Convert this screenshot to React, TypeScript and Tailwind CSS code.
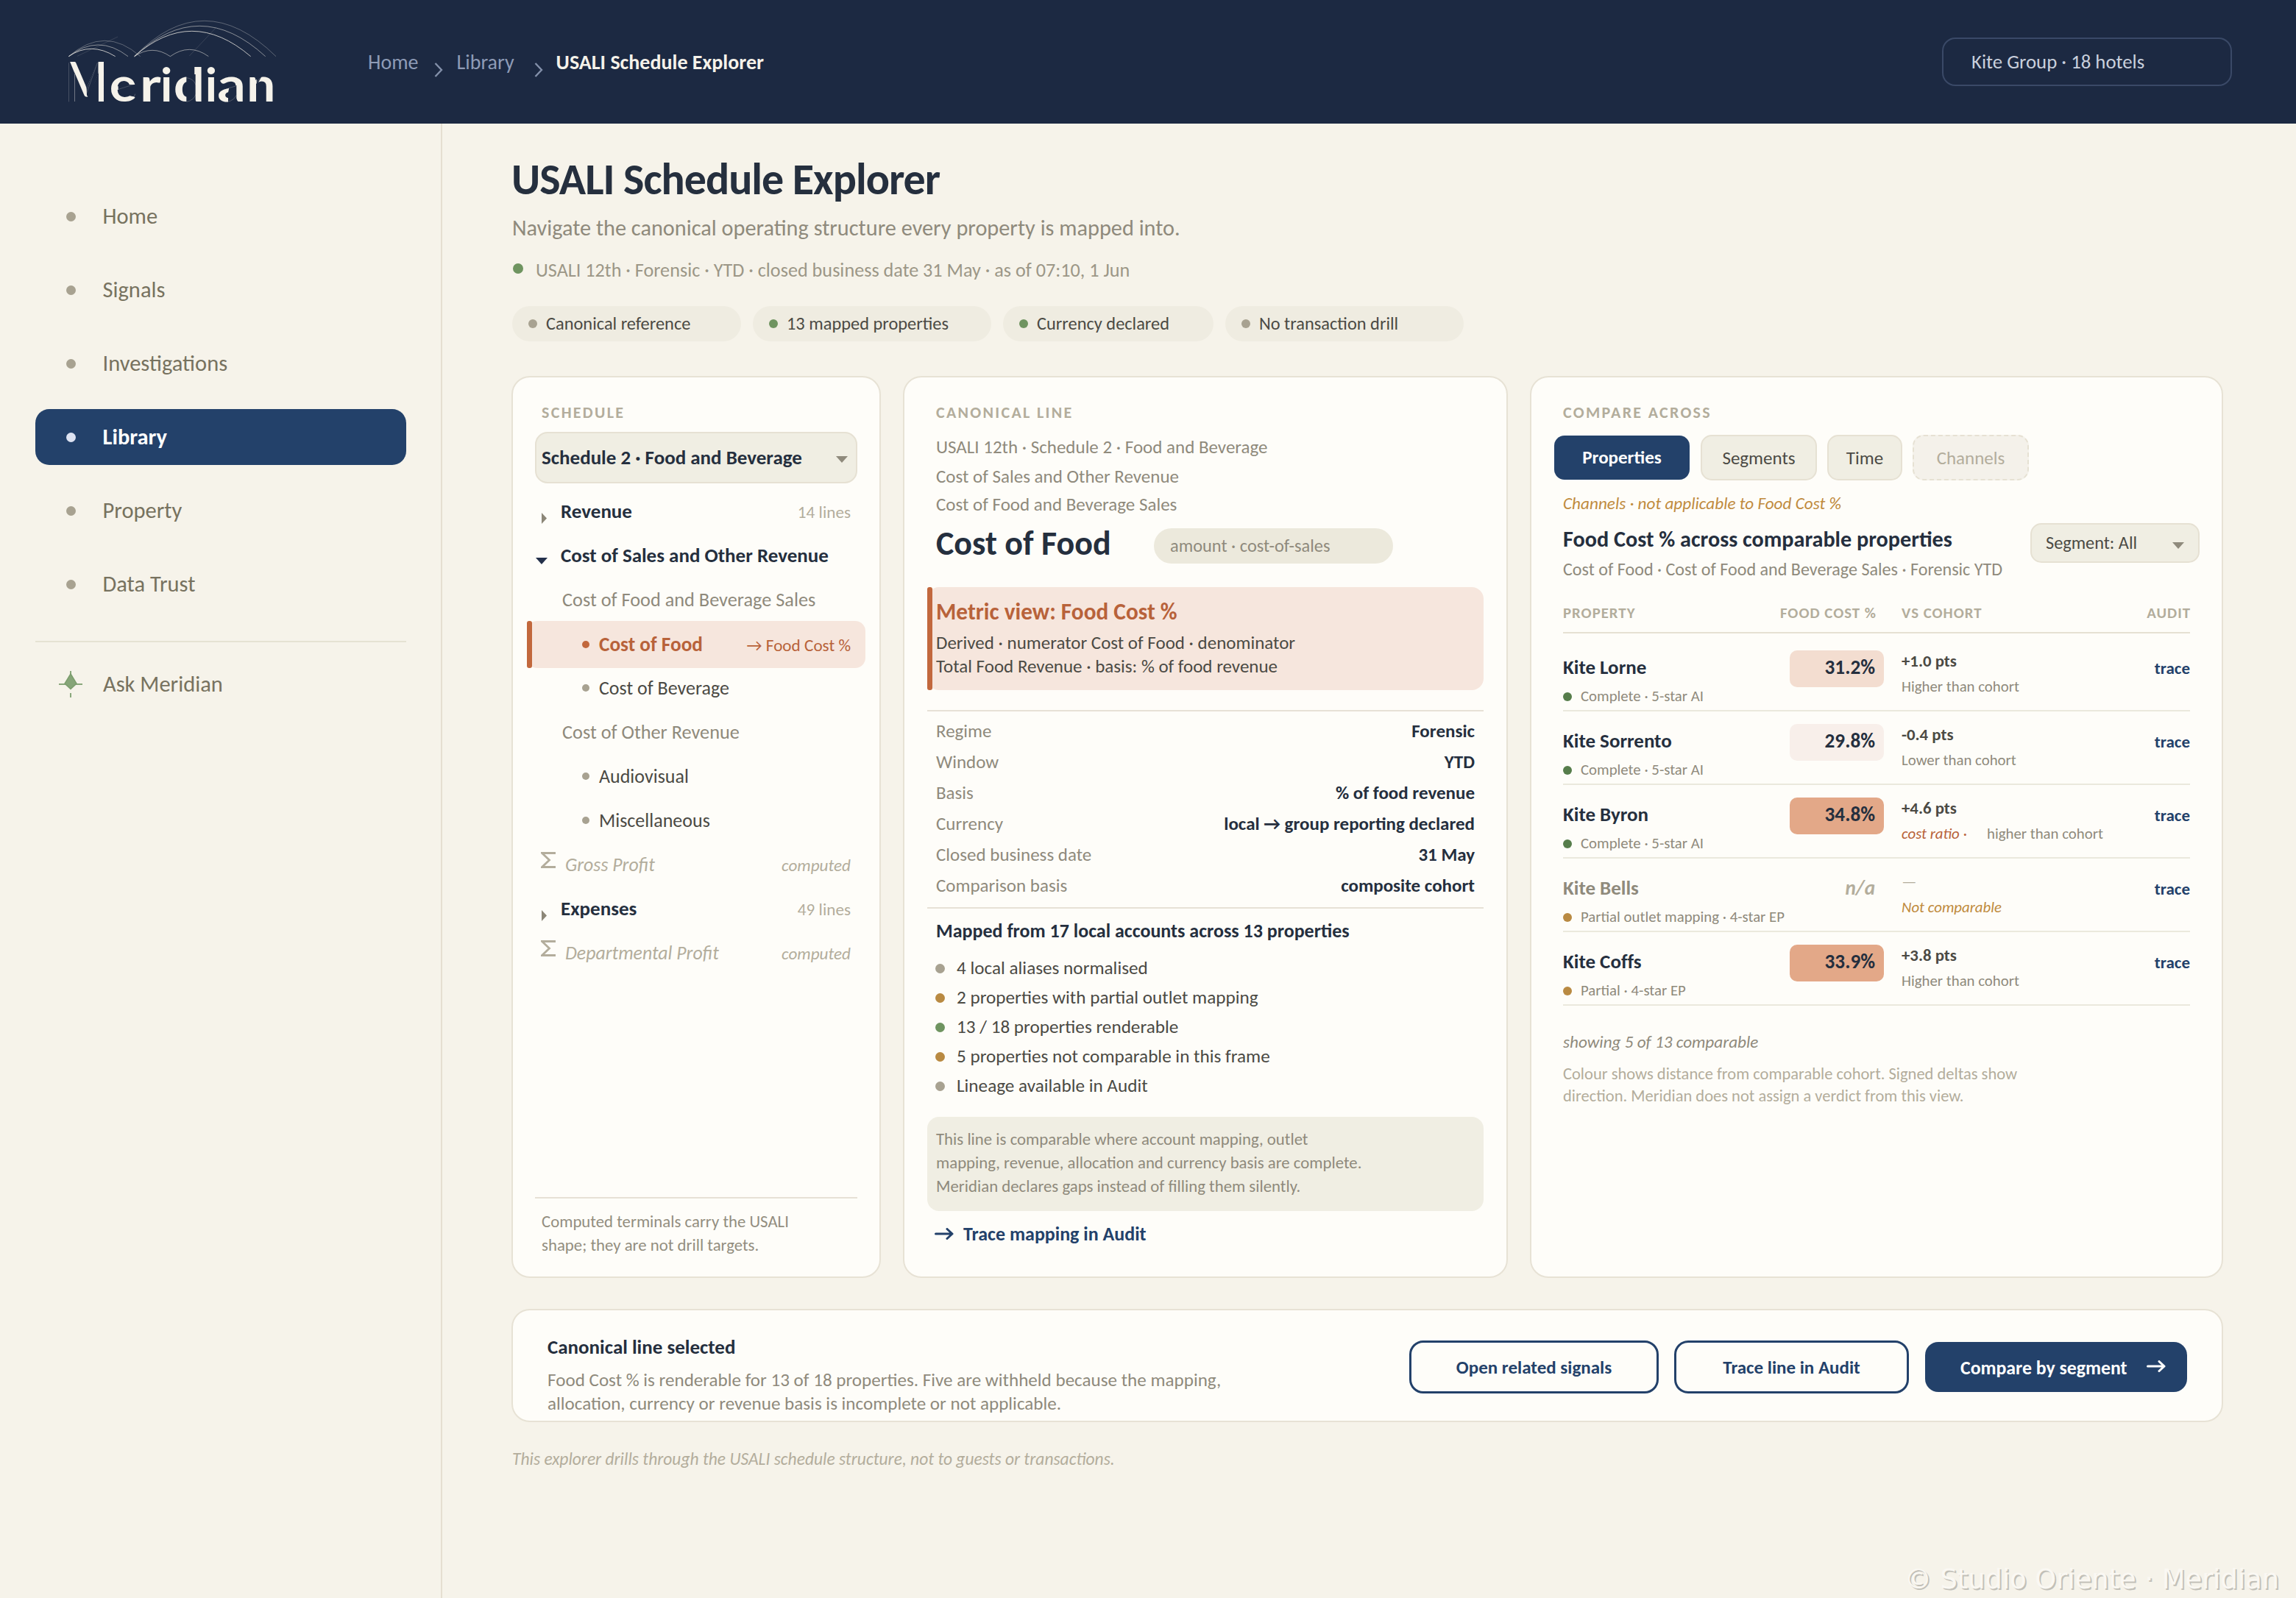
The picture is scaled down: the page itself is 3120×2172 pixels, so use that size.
import clsx from "clsx";

const NAV = ["Home", "Signals", "Investigations", "Library", "Property", "Data Trust"];

const PILLS = [
	{ label: "Canonical reference", dot: "bg-[#a8a291]", width: "w-[311px]" },
	{ label: "13 mapped properties", dot: "bg-[#6f9460]", width: "w-[324px]" },
	{ label: "Currency declared", dot: "bg-[#6f9460]", width: "w-[286px]" },
	{ label: "No transaction drill", dot: "bg-[#a8a291]", width: "w-[324px]" },
];

const TREE = [
	{ type: "closed", label: "Revenue", note: "14 lines" },
	{ type: "open", label: "Cost of Sales and Other Revenue" },
	{ type: "group", label: "Cost of Food and Beverage Sales" },
	{ type: "active", label: "Cost of Food", note: "→ Food Cost %" },
	{ type: "leaf", label: "Cost of Beverage" },
	{ type: "group", label: "Cost of Other Revenue" },
	{ type: "leaf", label: "Audiovisual" },
	{ type: "leaf", label: "Miscellaneous" },
	{ type: "computed", label: "Gross Profit", note: "computed" },
	{ type: "closed", label: "Expenses", note: "49 lines" },
	{ type: "computed", label: "Departmental Profit", note: "computed" },
];

const FACTS = [
	["Regime", "Forensic"],
	["Window", "YTD"],
	["Basis", "% of food revenue"],
	["Currency", "local → group reporting declared"],
	["Closed business date", "31 May"],
	["Comparison basis", "composite cohort"],
];

const MAPPING = [
	{ label: "4 local aliases normalised", dot: "bg-[#a8a291]" },
	{ label: "2 properties with partial outlet mapping", dot: "bg-[#b98a42]" },
	{ label: "13 / 18 properties renderable", dot: "bg-[#6f9460]" },
	{ label: "5 properties not comparable in this frame", dot: "bg-[#b98a42]" },
	{ label: "Lineage available in Audit", dot: "bg-[#a8a291]" },
];

const PROPERTIES = [
	{
		name: "Kite Lorne",
		status: "Complete · 5-star AI",
		dot: "bg-[#567d4b]",
		cost: "31.2%",
		chip: "bg-[#f3ddd0]",
		delta: "+1.0 pts",
		verdict: "Higher than cohort",
	},
	{
		name: "Kite Sorrento",
		status: "Complete · 5-star AI",
		dot: "bg-[#567d4b]",
		cost: "29.8%",
		chip: "bg-[#f8efea]",
		delta: "-0.4 pts",
		verdict: "Lower than cohort",
	},
	{
		name: "Kite Byron",
		status: "Complete · 5-star AI",
		dot: "bg-[#567d4b]",
		cost: "34.8%",
		chip: "bg-[#e3a888]",
		delta: "+4.6 pts",
		flag: "cost ratio ·",
		verdict: "higher than cohort",
	},
	{
		name: "Kite Bells",
		status: "Partial outlet mapping · 4-star EP",
		dot: "bg-[#b98a42]",
		cost: "n/a",
		delta: "—",
		verdict: "Not comparable",
		missing: true,
	},
	{
		name: "Kite Coffs",
		status: "Partial · 4-star EP",
		dot: "bg-[#b98a42]",
		cost: "33.9%",
		chip: "bg-[#e3a888]",
		delta: "+3.8 pts",
		verdict: "Higher than cohort",
	},
];

const LOGO_LETTERS = [
	{ char: "e", x: 206, width: 112 },
	{ char: "r", x: 330, width: 86 },
	{ char: "i", x: 414, width: 49 },
	{ char: "d", x: 467, width: 127 },
	{ char: "i", x: 596, width: 49 },
	{ char: "a", x: 646, width: 116 },
	{ char: "n", x: 766, width: 117 },
];

const Logo = () => (
	<svg
		viewBox="0 0 930 408"
		className="ml-20 w-[310px] h-[136px] shrink-0 overflow-visible"
		fill="none"
		stroke="#f5f2ea"
		strokeWidth="3"
	>
		<path d="M40 182Q130 120 230 182" opacity=".75" />
		<path d="M40 182Q160 88 282 182" opacity=".5" />
		<path d="M40 182Q188 54 332 182" opacity=".3" />
		<path d="M308 182Q540 -24 782 182" opacity=".75" />
		<path d="M308 182Q572 -66 842 182" opacity=".5" />
		<path d="M308 182Q590 -108 885 182" opacity=".3" />
		<path d="M308 182Q381 132 454 182Q532 126 610 182" opacity=".5" />
		<path d="M75 181 240 102M532 180 640 65" opacity=".13" />
		<text y="367" fill="#f5f2ea" stroke="none" fontSize="192" className="font-[Lato,sans-serif] font-bold">
			<tspan x="29" fontSize="222" textLength="168" lengthAdjust="spacingAndGlyphs">
				M
			</tspan>
			{LOGO_LETTERS.map(({ char, x, width }) => (
				<tspan key={x} x={x} textLength={width} lengthAdjust="spacingAndGlyphs">
					{char}
				</tspan>
			))}
		</text>
		{/* stencil cuts that leave only the heavy strokes */}
		<g fill="#1c2942" stroke="none">
			<path d="M34 203H45L64 250V372H34Z" />
			<path d="M113 312 157 203H160.500V254L122 352 114 340Z" />
			<path d="M242 297H318V348L296 344 242 330Z" />
			<path d="M520 255H557V374H520Z" />
			<path d="M696 300H724V374H690V330Z" />
			<path d="M806 255H832L806 300Z" />
		</g>
		<path d="M40.500 208V367M114 330 157 208M237 318 309 295" opacity=".3" strokeWidth="2" />
		<path
			d="M520 269Q550 272 559 300V335Q550 362 520 367M690 366Q712 362 724 340M690 312 724 302M804 292Q812 270 834 268M311 335Q306 356 285 364"
			opacity=".35"
			strokeWidth="2"
		/>
	</svg>
);

const Chevron = ({ className }: { className?: string }) => (
	<svg viewBox="0 0 12 20" className={clsx("w-3 h-5 mt-5", className)} fill="none" stroke="#8390aa" strokeWidth="2.4">
		<path d="M1.5 1 10 10 1.5 19" />
	</svg>
);

const Arrow = ({ className }: { className?: string }) => (
	<svg
		viewBox="0 0 26 16"
		className={clsx("w-[26px] h-4", className)}
		fill="none"
		stroke="currentColor"
		strokeWidth="3"
		strokeLinecap="round"
		strokeLinejoin="round"
	>
		<path d="M1.5 8H24M17 1.500 24 8 17 14.500" />
	</svg>
);

const CaretDown = ({ className }: { className?: string }) => (
	<svg viewBox="0 0 16 9" className={clsx("w-4 h-[9px]", className)} fill="currentColor">
		<path d="M0 0H16L8 9Z" />
	</svg>
);

const Header = () => (
	<header className="flex items-center h-[168px] shrink-0 bg-[#1c2942] text-[28px]">
		<Logo />
		<nav className="flex items-center ml-[110px] pt-px leading-10 text-[#8e9bb6]">
			<span>Home</span>
			<Chevron className="ml-[21px] mr-[19px]" />
			<span>Library</span>
			<Chevron className="ml-[27px] mr-[18px]" />
			<span className="font-bold text-[#f5f2ea]">USALI Schedule Explorer</span>
		</nav>
		<div className="flex items-center ml-auto mr-[87px] w-[394px] h-[66px] pt-px pl-[38px] border-2 border-[#3a4967] rounded-[18px] text-[26.8px] text-[#c9d0dd]">
			Kite Group · 18 hotels
		</div>
	</header>
);

const Sidebar = () => (
	<aside className="w-[601px] shrink-0 border-r-2 border-[#e5dfd1] pt-[88px] px-12 text-[30.5px] text-[#77725f]">
		<div className="flex flex-col gap-6">
			{NAV.map((item) => {
				const active = item === "Library";
				return (
					<div
						key={item}
						className={clsx(
							"flex items-center gap-[37px] h-[76px] pl-[41.5px] w-[504px] rounded-[19px]",
							active && "bg-[#23416a] font-bold text-white",
						)}
					>
						<span className={clsx("size-[13px] rounded-full", active ? "bg-[#dde3f2]" : "bg-[#a8a291]")} />
						<span>{item}</span>
					</div>
				);
			})}
		</div>
		<div className="w-[504px] mt-[39px] border-t-2 border-[#e5e2d3] pt-[19px]">
			<div className="flex items-center gap-[28px] h-[76px] pl-8">
				<svg viewBox="0 0 32 36" className="w-8 h-9" fill="none" stroke="#8aa87c" strokeWidth="2">
					<path d="M0 18H9M23 18H32M16 0V4M16 30V36" />
					<path d="M16 4 24 17 16 24.500 8 17Z" fill="#86a578" stroke="#7b9d6d" strokeWidth="1.500" />
				</svg>
				<span>Ask Meridian</span>
			</div>
		</div>
	</aside>
);

const Card = ({ className, children }: { className?: string; children: React.ReactNode }) => (
	<section className={clsx("border-2 border-[#e7e2d5] rounded-[25px] bg-[#fefdf9]", className)}>{children}</section>
);

const Eyebrow = ({ className, children }: { className?: string; children: React.ReactNode }) => (
	<h3 className={clsx("mt-8 text-[22px] leading-[31px] font-bold tracking-[2.3px] text-[#b3ad9c]", className)}>{children}</h3>
);

const TreeRow = ({ type, label, note }: { type: string; label: string; note?: string }) => {
	const active = type === "active";
	const computed = type === "computed";
	return (
		<div
			className={clsx(
				"flex items-center",
				active ? "h-16 -mt-px -mb-[3px] -mx-[11px] pr-5 rounded-[14px] bg-[#f6e6dd] text-[#b8623a]" : "h-[60px] pr-[9px]",
			)}
		>
			{type === "closed" && (
				<svg viewBox="0 0 7 15" className="w-[7px] h-[15px] ml-[9px] mr-[19px] mt-[18px]" fill="#8c8778">
					<path d="M0 0 7 7.500 0 15Z" />
				</svg>
			)}
			{type === "open" && <CaretDown className="ml-px mr-[18px] mt-[14px] text-[#23304a]" />}
			{active && <span className="self-stretch w-[7px] rounded-[3px] bg-[#c2683d] mr-[68px]" />}
			{type === "leaf" && <span className="w-16" />}
			{(active || type === "leaf") && (
				<span className={clsx("size-[10px] rounded-full mr-[13px]", active ? "bg-[#c2683d]" : "bg-[#a8a291]")} />
			)}
			{computed && (
				<svg
					viewBox="0 0 20 22"
					className="w-5 h-[22px] ml-2 mr-[13px] -mt-[12px]"
					fill="none"
					stroke="#b3ad9c"
					strokeWidth="2.8"
				>
					<path d="M20 1.500H1.500L11.500 11 1.500 20.500H20" />
				</svg>
			)}
			<span
				className={clsx(
					(type === "closed" || type === "open") && "text-[27px] font-bold text-[#252f3e]",
					type === "group" && "pt-px pl-[37px] text-[26.3px] text-[#8f8a7c]",
					type === "leaf" && "text-[26px] text-[#4b4a44]",
					active && "text-[27.3px] font-bold",
					computed && "text-[25.8px] italic text-[#b3ad9c]",
				)}
			>
				{label}
			</span>
			{note && (
				<span className={clsx("ml-auto text-[23.2px] pt-[2px]", !active && "text-[#b3ad9c]", computed && "italic")}>
					{note}
				</span>
			)}
		</div>
	);
};

const SchedulePanel = () => (
	<Card className="w-[502px] px-[30px] flex flex-col">
		<Eyebrow className="ml-[9px]">SCHEDULE</Eyebrow>
		<div className="flex items-center justify-between mt-[11px] mb-2 h-[70px] pt-px pl-[7px] pr-[11px] border-2 border-[#e6e1d3] rounded-[17px] bg-[#f0eee3] text-[27px] font-bold text-[#252f3e]">
			Schedule 2 · Food and Beverage
			<CaretDown className="mt-1 text-[#8f8a7c]" />
		</div>
		{TREE.map((row) => (
			<TreeRow key={row.label} {...row} />
		))}
		<p className="mt-auto mb-[27px] pt-[15px] pl-[9px] border-t-2 border-[#e7e1d6] text-[22.8px] leading-8 text-[#938e80]">
			Computed terminals carry the USALI
			<br />
			shape; they are not drill targets.
		</p>
	</Card>
);

const LinePanel = () => (
	<Card className="w-[822px] px-[31px]">
		<Eyebrow className="ml-3">CANONICAL LINE</Eyebrow>
		<div className="mt-3 ml-3 text-[25px] leading-10 text-[#8f8a7c]">
			<p>USALI 12th · Schedule 2 · Food and Beverage</p>
			<p>Cost of Sales and Other Revenue</p>
			<p className="-mt-[2px]">Cost of Food and Beverage Sales</p>
		</div>
		<div className="flex items-center h-12 mt-3 ml-3">
			<h2 className="w-[296px] pb-[9px] text-[46px] leading-[50px] font-bold text-[#252f3e]">Cost of Food</h2>
			<span className="w-[325px] h-12 pl-[22px] rounded-full bg-[#ece9dc] text-[24.4px] leading-[49px] text-[#8f8a7c]">
				amount · cost-of-sales
			</span>
		</div>
		<div className="flex h-[140px] mt-8 rounded-[16px] bg-[#f6e6dd]">
			<span className="w-[7px] rounded-[3px] bg-[#c2683d]" />
			<div className="pt-[14px] pl-[5px]">
				<h4 className="text-[31.3px] leading-[38px] font-bold text-[#b8623a]">Metric view: Food Cost %</h4>
				<p className="mt-2 text-[25px] leading-8 text-[#4b4a44]">
					Derived · numerator Cost of Food · denominator
					<br />
					Total Food Revenue · basis: % of food revenue
				</p>
			</div>
		</div>
		<dl className="mt-[27px] pt-[6px] pb-2 pl-3 pr-3 border-y-2 border-[#e7e1d6] text-[25px] leading-[42px]">
			{FACTS.map(([key, value]) => (
				<div key={key} className="flex justify-between">
					<dt className="text-[#8f8a7c]">{key}</dt>
					<dd className="font-bold text-[#252f3e]">{value}</dd>
				</div>
			))}
		</dl>
		<h4 className="mt-[13px] ml-3 text-[26px] leading-[34px] font-bold text-[#252f3e]">
			Mapped from 17 local accounts across 13 properties
		</h4>
		<ul className="mt-[14px] ml-[11px] text-[25.2px] leading-10 text-[#4b4a44]">
			{MAPPING.map((item) => (
				<li key={item.label} className="flex items-center">
					<span className={clsx("size-[13px] rounded-full mr-4", item.dot)} />
					{item.label}
				</li>
			))}
		</ul>
		<p className="h-32 mt-[22px] pt-[14px] pl-3 rounded-[16px] bg-[#f0eee3] text-[22.8px] leading-8 text-[#8f8a7c]">
			This line is comparable where account mapping, outlet
			<br />
			mapping, revenue, allocation and currency basis are complete.
			<br />
			Meridian declares gaps instead of filling them silently.
		</p>
		<a className="flex items-center mt-[13px] ml-[10px] text-[26px] leading-9 font-bold text-[#23416a]">
			<Arrow className="mr-[13px]" />
			Trace mapping in Audit
		</a>
	</Card>
);

const PropertyRow = ({ name, status, dot, cost, chip, delta, flag, verdict, missing }: (typeof PROPERTIES)[number]) => (
	<div className="flex h-[100px] border-b-2 border-[#ebe9dd]">
		<div className="w-[308px] pt-[23px]">
			<div
				className={clsx(
					"text-[27px] leading-[34px] font-bold [font-variant-ligatures:none]",
					missing ? "text-[#8f8a7c]" : "text-[#252f3e]",
				)}
			>
				{name}
			</div>
			<div className="flex items-center mt-[9px] text-[20.8px] leading-[27px] text-[#8f8a7c] whitespace-nowrap">
				<span className={clsx("size-3 rounded-full mr-3 shrink-0", dot)} />
				{status}
			</div>
		</div>
		<div
			className={clsx(
				"w-32 h-[50px] mt-[17px] pr-3 rounded-[10px] text-right text-[27.2px] leading-[46px] font-bold",
				chip,
				missing ? "italic text-[#b3ad9c]" : "text-[#252f3e]",
			)}
		>
			{cost}
		</div>
		<div className="ml-6 pt-4">
			<div className={clsx("text-[22.8px] leading-[30px]", missing ? "text-[#b3ad9c]" : "font-bold text-[#4b4a44]")}>{delta}</div>
			<div className="flex mt-[7px] text-[20.8px] leading-[26px] text-[#8f8a7c]">
				{flag && <span className="w-[116px] italic text-[#b8623a]">{flag}</span>}
				<span className={clsx(missing && "italic text-[#c08b3e]")}>{verdict}</span>
			</div>
		</div>
		<a className="ml-auto pt-6 text-[23px] leading-[34px] font-bold text-[#23416a]">trace</a>
	</div>
);

const ComparePanel = () => (
	<Card className="w-[942px] px-[43px]">
		<Eyebrow>COMPARE ACROSS</Eyebrow>
		<div className="flex items-center gap-[14px] mt-[15px] -ml-3 h-[62px] text-[25px] leading-[60px] text-center text-[#4b4a44]">
			<span className="w-[184px] h-[60px] mr-px rounded-[14px] bg-[#23416a] font-bold text-white">Properties</span>
			<span className="w-[158px] h-[62px] border-2 border-[#e6e1d3] rounded-[15px] bg-[#f0eee3]">Segments</span>
			<span className="w-[102px] h-[62px] border-2 border-[#e6e1d3] rounded-[15px] bg-[#f0eee3]">Time</span>
			<span className="w-[158px] h-[62px] border-2 border-dashed border-[#e6e1d3] rounded-[15px] bg-[#f4f1ea] text-[#b3ad9c]">
				Channels
			</span>
		</div>
		<p className="mt-4 text-[23.2px] leading-[30px] italic text-[#c08b3e]">Channels · not applicable to Food Cost %</p>
		<div className="flex justify-between mt-3 -mr-[13px]">
			<div className="pt-[3px]">
				<h4 className="text-[30.2px] leading-[38px] font-bold text-[#252f3e]">Food Cost % across comparable properties</h4>
				<p className="mt-[6px] text-[24.1px] leading-8 text-[#8f8a7c]">
					Cost of Food · Cost of Food and Beverage Sales · Forensic YTD
				</p>
			</div>
			<div className="flex items-center justify-between w-[230px] h-[54px] pt-px pl-[19px] pr-[19px] border-2 border-[#e6e1d3] rounded-[15px] bg-[#f0eee3] text-[24.3px] text-[#4b4a44]">
				Segment: All
				<CaretDown className="mt-[5px] text-[#8f8a7c]" />
			</div>
		</div>
		<div className="flex mt-[28px] mb-[6px] pb-[11px] border-b-2 border-[#e6e1d3] text-[20.8px] leading-[30px] font-bold tracking-[1px] text-[#b3ad9c]">
			<span className="w-[200px]">PROPERTY</span>
			<span className="w-[226px] text-right">FOOD COST %</span>
			<span className="ml-[34px]">VS COHORT</span>
			<span className="ml-auto -mr-px">AUDIT</span>
		</div>
		{PROPERTIES.map((row) => (
			<PropertyRow key={row.name} {...row} />
		))}
		<p className="mt-[34px] text-[23.2px] leading-[30px] italic text-[#8f8a7c]">showing 5 of 13 comparable</p>
		<p className="mt-[14px] text-[22.5px] leading-[30px] text-[#b3ad9c]">
			Colour shows distance from comparable cohort. Signed deltas show
			<br />
			direction. Meridian does not assign a verdict from this view.
		</p>
	</Card>
);

const ActionBar = () => (
	<Card className="flex justify-between mt-[42px] w-[2326px] h-[154px] pl-[47px] pr-[47px]">
		<div className="pt-[33px]">
			<h4 className="text-[27px] leading-[34px] font-bold text-[#252f3e]">Canonical line selected</h4>
			<p className="mt-3 text-[25.1px] leading-8 text-[#8f8a7c]">
				Food Cost % is renderable for 13 of 18 properties. Five are withheld because the mapping,
				<br />
				allocation, currency or revenue basis is incomplete or not applicable.
			</p>
		</div>
		<div className="flex items-center h-[72px] mt-[41px] text-[25px] font-bold text-[#23416a]">
			<button className="w-[339px] h-[72px] pt-[2px] border-3 border-[#23416a] rounded-[19px]">Open related signals</button>
			<button className="w-[319px] h-[72px] ml-[21px] pt-[2px] border-3 border-[#23416a] rounded-[19px]">Trace line in Audit</button>
			<button className="flex items-center w-[356px] h-[68px] ml-[22px] pt-[2px] pl-12 rounded-[18px] bg-[#23416a] text-[25.8px] text-white">
				Compare by segment
				<Arrow className="ml-[26px] -mt-1" />
			</button>
		</div>
	</Card>
);

const App = () => {
	return (
		<div className="relative flex flex-col w-[3120px] h-[2172px] overflow-hidden bg-[#f6f3ea] font-[Carlito,Calibri,Lato,sans-serif]">
			<Header />
			<div className="flex flex-1">
				<Sidebar />
				<main className="pl-[94px] pt-[41px]">
					<h1 className="text-[60px] leading-[70px] font-bold tracking-[-1px] text-[#252f3e]">USALI Schedule Explorer</h1>
					<p className="mt-[11px] pl-px text-[30.3px] leading-10 text-[#8f8a7c]">
						Navigate the canonical operating structure every property is mapped into.
					</p>
					<p className="flex items-center mt-[21px] pl-[2px] text-[26.2px] leading-8 text-[#9c9787]">
						<span className="size-[14px] rounded-full mr-[17px] -mt-1 bg-[#6f9460]" />
						USALI 12th · Forensic · YTD · closed business date 31 May · as of 07:10, 1 Jun
					</p>
					<div className="flex gap-4 mt-[33px] pl-px">
						{PILLS.map((pill) => (
							<span
								key={pill.label}
								className={clsx("flex items-center h-12 pl-[22px] rounded-full bg-[#efece1] text-[24.4px] text-[#4b4a44]", pill.width)}
							>
								<span className={clsx("size-3 rounded-full mr-3", pill.dot)} />
								{pill.label}
							</span>
						))}
					</div>
					<div className="flex gap-[30px] h-[1226px] mt-[47px]">
						<SchedulePanel />
						<LinePanel />
						<ComparePanel />
					</div>
					<ActionBar />
					<p className="mt-[34px] pl-px text-[23.5px] leading-8 italic text-[#b3ad9c]">
						This explorer drills through the USALI schedule structure, not to guests or transactions.
					</p>
				</main>
			</div>
			<div className="absolute right-[23px] bottom-[4px] text-[36.8px] leading-[42px] text-[#faf8f3] [text-shadow:2px_2px_0_#c2c0b8] font-['DejaVu_Sans',sans-serif]">
				© Studio Oriente · Meridian
			</div>
		</div>
	);
};

export default App;
